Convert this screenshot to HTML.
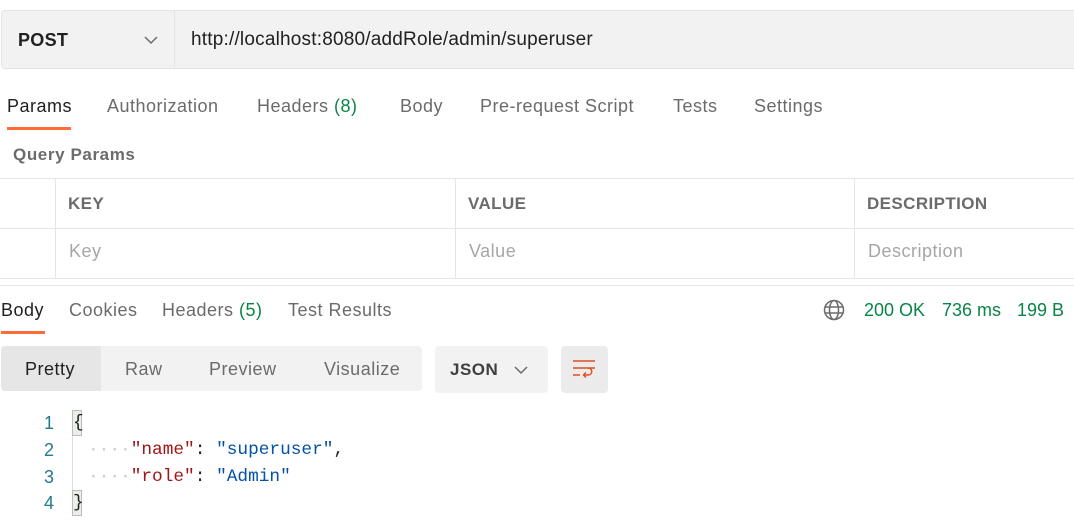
<!DOCTYPE html>
<html><head><meta charset="utf-8"><style>
body{margin:0;width:1074px;height:529px;background:#fff;font-family:"Liberation Sans",sans-serif;position:relative;overflow:hidden;color:#6b6b6b}
.a{position:absolute;white-space:nowrap}
.t{font-size:18px;line-height:20px;letter-spacing:0.5px}
.hl{position:absolute;height:1px;background:#e6e6e6}
.vl{position:absolute;width:1px;background:#e6e6e6}
.mono{font-family:"Liberation Mono",monospace;font-size:17.8px;line-height:20px}
.ln{font-family:"Liberation Sans",sans-serif;font-size:18px;line-height:20px;color:#237893;width:24px;text-align:right}
</style></head><body>
<div class="a" style="left:1px;top:10px;width:1080px;height:59px;background:#f2f2f2;border:1px solid #e4e4e4;border-radius:4px;box-sizing:border-box"></div>
<div class="vl" style="left:174px;top:11px;height:58px;background:#e4e4e4"></div>
<div class="a" style="left:18px;top:30px;font-size:18px;font-weight:bold;color:#212121;line-height:20px;letter-spacing:0.3px">POST</div>
<svg class="a" style="left:144px;top:35px" width="14" height="10"><path d="M1 2 L7 8 L13 2" fill="none" stroke="#6b6b6b" stroke-width="1.5"/></svg>
<div class="a" style="left:191px;top:30px;font-size:19px;letter-spacing:0.2px;color:#212121;line-height:20px">http://localhost:8080/addRole/admin/superuser</div>

<div class="a t" style="left:7px;top:96px;color:#212121">Params</div>
<div class="a t" style="left:107px;top:96px">Authorization</div>
<div class="a t" style="left:257px;top:96px">Headers <span style="color:#0a8547">(8)</span></div>
<div class="a t" style="left:400px;top:96px">Body</div>
<div class="a t" style="left:480px;top:96px">Pre-request Script</div>
<div class="a t" style="left:673px;top:96px">Tests</div>
<div class="a t" style="left:754px;top:96px">Settings</div>
<div class="a" style="left:7px;top:127px;width:64px;height:3px;background:#ff6c37"></div>

<div class="a t" style="left:13px;top:145px;font-weight:bold;font-size:17px;letter-spacing:0.6px">Query Params</div>
<div class="hl" style="left:0;top:178px;width:1074px"></div>
<div class="hl" style="left:0;top:228px;width:1074px"></div>
<div class="hl" style="left:0;top:278px;width:1074px"></div>
<div class="vl" style="left:55px;top:179px;height:99px"></div>
<div class="vl" style="left:455px;top:179px;height:99px"></div>
<div class="vl" style="left:854px;top:179px;height:99px"></div>
<div class="a t" style="left:68px;top:194px;font-weight:bold;font-size:17px;letter-spacing:0.4px">KEY</div>
<div class="a t" style="left:468px;top:194px;font-weight:bold;font-size:17px;letter-spacing:0.4px">VALUE</div>
<div class="a t" style="left:867px;top:194px;font-weight:bold;font-size:17px;letter-spacing:0.4px">DESCRIPTION</div>
<div class="a t" style="left:69px;top:241px;color:#a6a6a6">Key</div>
<div class="a t" style="left:469px;top:241px;color:#a6a6a6">Value</div>
<div class="a t" style="left:868px;top:241px;color:#a6a6a6">Description</div>
<div class="hl" style="left:0;top:285px;width:1074px"></div>

<div class="a t" style="left:1px;top:300px;color:#212121">Body</div>
<div class="a t" style="left:69px;top:300px">Cookies</div>
<div class="a t" style="left:162px;top:300px">Headers <span style="color:#0a8547">(5)</span></div>
<div class="a t" style="left:288px;top:300px">Test Results</div>
<div class="a" style="left:1px;top:331px;width:44px;height:3px;background:#ff6c37"></div>
<svg class="a" style="left:823px;top:299px" width="22" height="22" fill="none" stroke="#6b6b6b" stroke-width="1.5"><circle cx="11" cy="11" r="9.5"/><ellipse cx="11" cy="11" rx="4.5" ry="9.5"/><path d="M2 8h18M2 14h18"/></svg>
<div class="a t" style="left:864px;top:300px;color:#0a8547;letter-spacing:0">200 OK</div>
<div class="a t" style="left:942px;top:300px;color:#0a8547;letter-spacing:0">736 ms</div>
<div class="a t" style="left:1017px;top:300px;color:#0a8547;letter-spacing:0">199 B</div>

<div class="a" style="left:1px;top:346px;width:421px;height:45px;background:#f2f2f2;border-radius:4px"></div>
<div class="a" style="left:1px;top:346px;width:100px;height:45px;background:#e6e6e6;border-radius:4px 0 0 4px"></div>
<div class="a t" style="left:25px;top:359px;color:#212121">Pretty</div>
<div class="a t" style="left:125px;top:359px">Raw</div>
<div class="a t" style="left:209px;top:359px">Preview</div>
<div class="a t" style="left:324px;top:359px">Visualize</div>
<div class="a" style="left:435px;top:346px;width:113px;height:47px;background:#f2f2f2;border-radius:4px"></div>
<div class="a t" style="left:450px;top:360px;font-weight:bold;font-size:17px;color:#404040">JSON</div>
<svg class="a" style="left:514px;top:365px" width="14" height="10"><path d="M1 2 L7 8 L13 2" fill="none" stroke="#6b6b6b" stroke-width="1.5"/></svg>
<div class="a" style="left:561px;top:346px;width:47px;height:47px;background:#ebebeb;border-radius:4px"></div>
<svg class="a" style="left:572px;top:358px" width="26" height="24" fill="none" stroke="#e0501e" stroke-width="1.5"><path d="M1 3h22M1 10h22M1 17h7"/><path d="M16 10c5 0 5 7 0 7h-4M14 14.5l-2.5 2.5 2.5 2.5"/></svg>

<div class="a ln" style="left:30px;top:413px">1</div>
<div class="a ln" style="left:30px;top:440px">2</div>
<div class="a ln" style="left:30px;top:467px">3</div>
<div class="a ln" style="left:30px;top:493px">4</div>
<div class="vl" style="left:72px;top:410px;height:105px;background:#ddd"></div>
<div class="a" style="left:72px;top:410px;width:8px;height:24px;border:1px solid #bbb;background:#e8f0e8"></div>
<div class="a" style="left:72px;top:490px;width:8px;height:24px;border:1px solid #bbb;background:#e8f0e8"></div>
<div class="a mono" style="left:73px;top:413px;color:#212121">{</div>
<div class="a mono" style="left:88px;top:440px;color:#212121"><span style="color:#ccc;">····</span><span style="color:#a31515">"name"</span>: <span style="color:#0451a5">"superuser"</span>,</div>
<div class="a mono" style="left:88px;top:467px;color:#212121"><span style="color:#ccc;">····</span><span style="color:#a31515">"role"</span>: <span style="color:#0451a5">"Admin"</span></div>
<div class="a mono" style="left:73px;top:493px;color:#212121">}</div>
</body></html>
